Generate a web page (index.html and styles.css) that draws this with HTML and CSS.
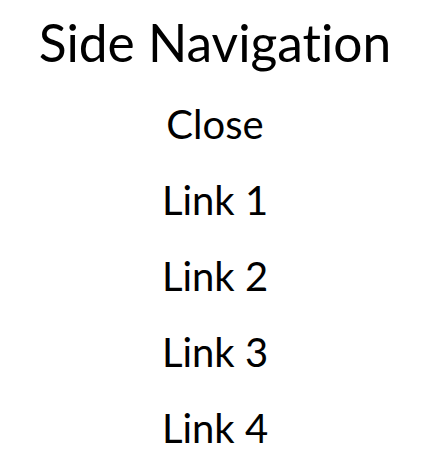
FILE: index.html
```html
<!DOCTYPE html>
<html>
<head>
<meta charset="utf-8">
<link rel="stylesheet" href="styles.css">
</head>
<body>
<nav class="sidenav">
  <h1 class="title">Side Navigation</h1>
  <a class="link" href="#">Close</a>
  <a class="link" href="#">Link 1</a>
  <a class="link" href="#">Link 2</a>
  <a class="link" href="#">Link 3</a>
  <a class="link" href="#">Link 4</a>
</nav>
</body>
</html>
```
FILE: styles.css
```css
html, body {
  margin: 0;
  padding: 0;
  background: #fff;
}
body {
  font-family: Lato, "Open Sans", sans-serif;
  font-variant-ligatures: none;
  color: #000;
}
.sidenav {
  display: flex;
  flex-direction: column;
  align-items: center;
  padding-top: 7px;
}
.title {
  margin: 0 0 9px;
  font-weight: 400;
  font-size: 51.5px;
  line-height: 70px;
}
.link {
  color: #000;
  text-decoration: none;
  font-size: 40px;
  line-height: 76px;
}
```
